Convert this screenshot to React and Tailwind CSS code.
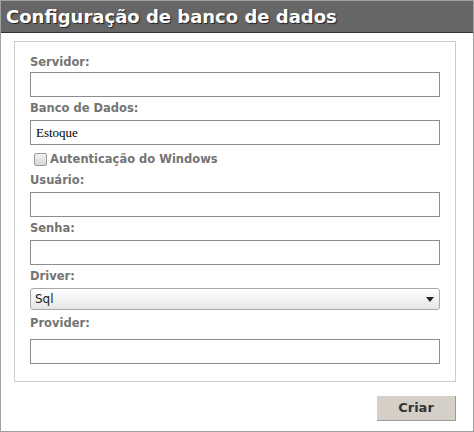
import React, { useState } from 'react';

const labelCls = "block font-['DejaVu_Sans',Verdana,sans-serif] text-[11.5px] font-bold text-[#747474]";
const inputCls = "block w-full h-[25px] border border-[#8c8c8c] bg-white px-[5px] font-['Liberation_Serif',serif] text-[13px] text-black outline-none";

export default function App() {
  const [form, setForm] = useState({
    servidor: '',
    banco: 'Estoque',
    windowsAuth: false,
    usuario: '',
    senha: '',
    driver: 'Sql',
    provider: ''
  });

  const handleChange = (e) => {
    const { name, value, type, checked } = e.target;
    setForm(prev => ({ ...prev, [name]: type === 'checkbox' ? checked : value }));
  };

  return (
    <div className="w-[474px] h-[432px] bg-white border border-[#a0a0a0] flex flex-col">
      {/* Title bar */}
      <div className="h-[32px] bg-[#666666] border-b border-[#333333] px-[5px] flex items-center">
        <h1 className="font-['DejaVu_Sans',Verdana,sans-serif] text-[18px] font-bold text-white leading-none [text-shadow:1px_1px_1px_#222]">
          Configuração de banco de dados
        </h1>
      </div>

      <div className="pl-[13px] pr-[17px] pt-[8px]">
        <div className="border border-[#cccccc] px-[15px] pt-[10px] pb-[17px]">
          <label className={`${labelCls} h-[20px] leading-[20px]`}>Servidor:</label>
          <input name="servidor" value={form.servidor} onChange={handleChange} className={inputCls} />

          <label className={`${labelCls} h-[23px] leading-[23px]`}>Banco de Dados:</label>
          <input name="banco" value={form.banco} onChange={handleChange} className={inputCls} />

          <label className="flex items-center h-[24px] pt-[5px] gap-[3px] pl-[4px] cursor-pointer">
            <input
              type="checkbox"
              name="windowsAuth"
              checked={form.windowsAuth}
              onChange={handleChange}
              className="appearance-none w-[13px] h-[13px] rounded-[2px] border border-[#9a9a9a] bg-gradient-to-b from-[#f2f2f2] to-[#d6d6d6] m-0"
            />
            <span className="font-['DejaVu_Sans',Verdana,sans-serif] text-[11.5px] font-bold text-[#747474]">Autenticação do Windows</span>
          </label>

          <label className={`${labelCls} h-[23px] leading-[23px]`}>Usuário:</label>
          <input name="usuario" value={form.usuario} onChange={handleChange} className={inputCls} />

          <label className={`${labelCls} h-[23px] leading-[23px]`}>Senha:</label>
          <input type="password" name="senha" value={form.senha} onChange={handleChange} className={inputCls} />

          <label className={`${labelCls} h-[23px] leading-[23px]`}>Driver:</label>
          <div className="relative h-[22px] rounded-[3px] border border-[#a8a8a8] bg-gradient-to-b from-white to-[#e6e6e6] flex items-center pl-[4px]">
            <span className="font-['DejaVu_Sans',Tahoma,sans-serif] text-[12px] text-[#222]">{form.driver}</span>
            <svg className="absolute right-[5px] top-[8px]" width="8" height="5" viewBox="0 0 8 5">
              <path d="M0 0 H8 L4 5 Z" fill="#222" />
            </svg>
          </div>

          <label className={`${labelCls} h-[29px] leading-[23px] pt-[2px]`}>Provider:</label>
          <input name="provider" value={form.provider} onChange={handleChange} className={inputCls} />
        </div>

        <div className="flex justify-end pt-[14px]">
          <button
            type="button"
            className="w-[79px] h-[25px] bg-[#d4d0c8] border-b border-r border-[#9a9a9a] font-['DejaVu_Sans',Tahoma,sans-serif] text-[13px] font-bold text-[#333]"
          >
            Criar
          </button>
        </div>
      </div>
    </div>
  );
}
